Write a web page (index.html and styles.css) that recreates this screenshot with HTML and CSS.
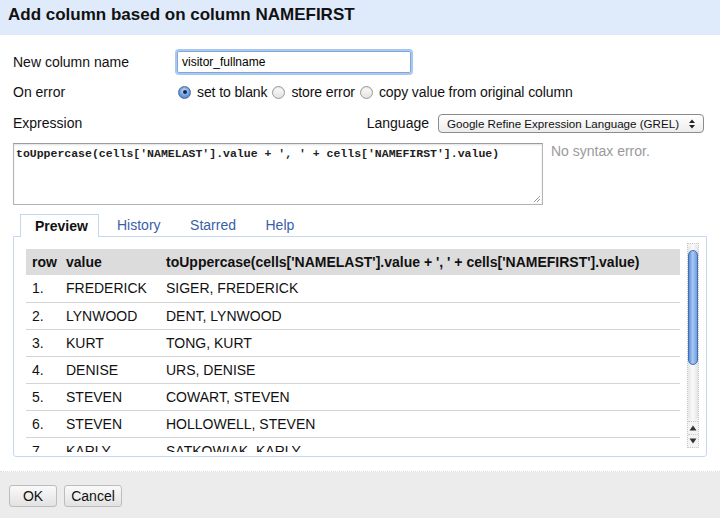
FILE: index.html
```html
<!DOCTYPE html>
<html>
<head>
<meta charset="utf-8">
<link rel="stylesheet" href="styles.css">
</head>
<body>
<div class="dialog">
  <div class="header">Add column based on column NAMEFIRST</div>
  <div class="body">
    <div class="row row-name">
      <div class="label">New column name</div>
      <div class="input">visitor_fullname</div>
    </div>
    <div class="row row-error">
      <div class="label">On error</div>
      <div class="radios">
        <span class="radio checked"></span><span class="rlabel">set to blank</span>
        <span class="radio"></span><span class="rlabel">store error</span>
        <span class="radio"></span><span class="rlabel">copy value from original column</span>
      </div>
    </div>
    <div class="row row-expr">
      <div class="label">Expression</div>
      <div class="lang">
        <span class="lang-label">Language</span>
        <div class="select">
          <span>Google Refine Expression Language (GREL)</span>
          <svg class="sel-arrows" width="8" height="12" viewBox="0 0 8 12"><path d="M1 5 L4 1.5 L7 5 Z M1 7 L4 10.5 L7 7 Z" fill="#222"/></svg>
        </div>
      </div>
    </div>
    <div class="expr-row">
      <div class="textarea">toUppercase(cells['NAMELAST'].value + ', ' + cells['NAMEFIRST'].value)
        <svg class="grip" width="8" height="8" viewBox="0 0 8 8"><path d="M7 1 L1 7 M7 4 L4 7" stroke="#999" stroke-width="1"/></svg>
      </div>
      <div class="status">No syntax error.</div>
    </div>
    <div class="tabs">
      <div class="tab active">Preview</div>
      <div class="tab">History</div>
      <div class="tab">Starred</div>
      <div class="tab">Help</div>
    </div>
    <div class="panel">
      <div class="scroller">
        <div class="table-wrap">
          <table class="preview">
            <thead>
              <tr><th class="c-row">row</th><th class="c-val">value</th><th>toUppercase(cells['NAMELAST'].value + ', ' + cells['NAMEFIRST'].value)</th></tr>
            </thead>
            <tbody>
              <tr><td>1.</td><td>FREDERICK</td><td>SIGER, FREDERICK</td></tr>
              <tr><td>2.</td><td>LYNWOOD</td><td>DENT, LYNWOOD</td></tr>
              <tr><td>3.</td><td>KURT</td><td>TONG, KURT</td></tr>
              <tr><td>4.</td><td>DENISE</td><td>URS, DENISE</td></tr>
              <tr><td>5.</td><td>STEVEN</td><td>COWART, STEVEN</td></tr>
              <tr><td>6.</td><td>STEVEN</td><td>HOLLOWELL, STEVEN</td></tr>
              <tr><td>7.</td><td>KARLY</td><td>SATKOWIAK, KARLY</td></tr>
              <tr><td>8.</td><td>JOHN</td><td>SMITH, JOHN</td></tr>
            </tbody>
          </table>
        </div>
        <div class="scrollbar">
          <div class="track">
            <div class="thumb"></div>
          </div>
          <div class="arrow">
            <svg width="8" height="6" viewBox="0 0 8 6"><path d="M0.5 5.5 L4 0.5 L7.5 5.5 Z" fill="#333"/></svg>
          </div>
          <div class="arrow">
            <svg width="8" height="6" viewBox="0 0 8 6"><path d="M0.5 0.5 L4 5.5 L7.5 0.5 Z" fill="#333"/></svg>
          </div>
        </div>
      </div>
    </div>
  </div>
  <div class="footer">
    <div class="btn btn-ok">OK</div>
    <div class="btn btn-cancel">Cancel</div>
  </div>
</div>
</body>
</html>
```

FILE: styles.css
```css
* { box-sizing: border-box; }
html, body { margin: 0; padding: 0; }
body {
  width: 720px;
  height: 518px;
  overflow: hidden;
  font-family: "Liberation Sans", Arial, sans-serif;
  font-size: 14px;
  color: #111;
  background: #fff;
}
.dialog {
  display: flex;
  flex-direction: column;
  height: 518px;
}
.header {
  height: 35px;
  flex: none;
  background: #dfeafb;
  border-bottom: 1px dotted #e4e8ee;
  font-weight: bold;
  font-size: 17px;
  line-height: 20px;
  padding: 5px 0 0 8px;
  color: #111;
}
.body {
  flex: 1;
  padding: 0 13px;
  border-bottom: 1px dotted #ddd;
}
.row {
  display: flex;
  align-items: center;
}
.label {
  width: 164px;
  flex: none;
}
.row-name {
  margin-top: 16px;
  height: 22px;
}
.input {
  width: 234px;
  height: 22px;
  border: 1px solid #7fa7dd;
  box-shadow: 0 0 0 2px #a9c8f0;
  border-radius: 2px;
  font-size: 12px;
  padding: 3px 0 0 4px;
  color: #000;
}
.row-error {
  margin-top: 9px;
  height: 20px;
}
.radios {
  display: flex;
  align-items: center;
  margin-left: 1px;
}
.radio {
  width: 13px;
  height: 13px;
  border-radius: 50%;
  border: 1px solid #9a9a9a;
  background: linear-gradient(#fdfdfd, #e2e2e2);
  box-shadow: inset 0 1px 1px rgba(0,0,0,0.12);
  margin-right: 6px;
  position: relative;
  flex: none;
}
.radio.checked {
  border-color: #4d6fa3;
  background: radial-gradient(circle at 50% 35%, #cfe4ff 0%, #6e9fe0 55%, #3f74c4 100%);
}
.radio.checked::after {
  content: "";
  position: absolute;
  left: 3.5px;
  top: 3.5px;
  width: 4px;
  height: 4px;
  border-radius: 50%;
  background: #14284a;
}
.rlabel {
  margin-right: 5px;
  letter-spacing: -0.1px;
}
.row-expr {
  margin-top: 11px;
  height: 20px;
  justify-content: space-between;
}
.lang {
  display: flex;
  align-items: center;
  margin-right: 3px;
}
.lang-label {
  margin-right: 9px;
}
.select {
  width: 266px;
  height: 19px;
  border: 1px solid #8c8c8c;
  border-radius: 4px;
  background: linear-gradient(#ffffff, #ececec);
  font-size: 11.6px;
  display: flex;
  align-items: center;
  justify-content: space-between;
  padding: 0 7px 0 8px;
  color: #111;
}
.sel-arrows { margin-top: 1px; }
.expr-row {
  display: flex;
  margin-top: 10px;
}
.textarea {
  width: 530px;
  height: 62px;
  border: 1px solid #b4b4b4;
  border-top-color: #9c9c9c;
  box-shadow: inset 0 1px 2px rgba(0,0,0,0.12);
  font-family: "Liberation Mono", "Courier New", monospace;
  font-size: 11.5px;
  font-weight: bold;
  color: #222;
  padding: 3px 2px;
  position: relative;
  white-space: pre;
}
.grip {
  position: absolute;
  right: 1px;
  bottom: 1px;
}
.status {
  margin-left: 8px;
  color: #9a9a9a;
}
.tabs {
  display: flex;
  margin-top: 9px;
  padding-left: 7px;
  height: 22px;
  position: relative;
  z-index: 1;
}
.tab {
  padding: 3px 0 0 0;
  margin-right: 29.5px;
  color: #3a5ea8;
  height: 23px;
}
.tab.active {
  width: 79px;
  padding-left: 14px;
  font-weight: bold;
  color: #111;
  background: #fff;
  border: 1px solid #c6d8f1;
  border-bottom: none;
  margin-right: 18px;
}
.panel {
  height: 221px;
  border: 1px solid #c6d8f1;
  border-radius: 0 0 3px 3px;
  padding: 6px 5px 0 12px;
}
.scroller {
  display: flex;
  height: 209px;
  overflow: hidden;
}
.table-wrap {
  width: 654px;
  flex: none;
  margin-right: 7px;
  padding-top: 6px;
  overflow: hidden;
}
.preview {
  width: 654px;
  border-collapse: collapse;
  font-size: 14px;
}
.preview th {
  text-align: left;
  background: #dcdcdc;
  height: 26px;
  padding: 0 0 0 6px;
  font-weight: bold;
}
.preview td {
  height: 27px;
  padding: 0 0 0 6px;
  border-bottom: 1px solid #d4d4d4;
}
.preview .c-row { width: 34px; }
.preview .c-val { width: 100px; }
.scrollbar {
  width: 12px;
  flex: none;
  display: flex;
  flex-direction: column;
  height: 205px;
  border: 1px dotted #c8c8c8;
  background: #f4f4f4;
}
.track {
  flex: 1;
  background: linear-gradient(90deg, #e6e6e6, #fafafa 50%, #e2e2e2);
  border-radius: 6px;
  padding-top: 6px;
}
.thumb {
  height: 115px;
  border-radius: 6px;
  border: 1px solid #3e6fb8;
  background: linear-gradient(90deg, #5d8fd6, #a9c9f3 45%, #6e9ee0);
}
.arrow {
  height: 13px;
  display: flex;
  align-items: center;
  justify-content: center;
  border-top: 1px dotted #ccc;
}
.footer {
  height: 46px;
  flex: none;
  background: #ececec;
  display: flex;
  align-items: flex-start;
  padding: 13px 0 0 9px;
  gap: 7px;
}
.btn {
  height: 22px;
  border: 1px solid #bdbdbd;
  border-radius: 3px;
  background: linear-gradient(#fafafa, #e2e2e2);
  padding: 2px 0 0;
  text-align: center;
  font-size: 14px;
  color: #111;
}
.btn-ok { width: 48px; }
.btn-cancel { width: 58px; }
```
